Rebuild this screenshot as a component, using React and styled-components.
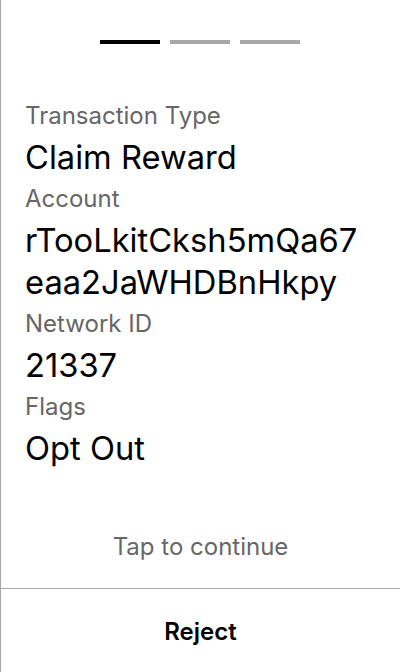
import styled, { createGlobalStyle } from 'styled-components';

const GlobalStyle = createGlobalStyle`
  html, body {
    margin: 0;
    padding: 0;
    background: #fff;
  }
  body {
    font-family: Inter, "Noto Sans", sans-serif;
  }
`;

const fields = [
  { label: 'Transaction Type', value: ['Claim Reward'] },
  { label: 'Account', value: ['rTooLkitCksh5mQa67', 'eaa2JaWHDBnHkpy'] },
  { label: 'Network ID', value: ['21337'] },
  { label: 'Flags', value: ['Opt Out'] },
];

const App = () => {
  return (
    <>
      <GlobalStyle />
      <Screen>
        <Body>
          <Steps>
            <Step active />
            <Step />
            <Step />
          </Steps>
          <Fields>
            {fields.map((f) => (
              <Field key={f.label}>
                <Label>{f.label}</Label>
                {f.value.map((line) => (
                  <Value key={line}>{line}</Value>
                ))}
              </Field>
            ))}
          </Fields>
          <Hint>Tap to continue</Hint>
        </Body>
        <Footer>
          <RejectButton>Reject</RejectButton>
        </Footer>
      </Screen>
    </>
  );
};

const Screen = styled.div`
  width: 400px;
  height: 672px;
  box-sizing: border-box;
  border-left: 1px solid #a8a8a8;
  display: flex;
  flex-direction: column;
`;

const Body = styled.div`
  flex: 1;
  display: flex;
  flex-direction: column;
`;

const Steps = styled.div`
  display: flex;
  justify-content: center;
  gap: 10px;
  margin-top: 40px;
  margin-left: -1px;
`;

const Step = styled.div`
  width: 60px;
  height: 4px;
  background: ${(p) => (p.active ? '#000' : '#a8a8a8')};
`;

const Fields = styled.div`
  display: flex;
  flex-direction: column;
  gap: 3px;
  padding: 0 24px;
  margin-top: 54px;
`;

const Field = styled.div`
  display: flex;
  flex-direction: column;
`;

const Label = styled.div`
  font-size: 24px;
  line-height: 36px;
  color: #666;
`;

const Value = styled.div`
  font-size: 32.7px;
  line-height: 42px;
  color: #000;

  ${Label} + & {
    margin-top: 2px;
  }
`;

const Hint = styled.div`
  margin-top: auto;
  margin-bottom: 26px;
  text-align: center;
  font-size: 24px;
  line-height: 30px;
  color: #666;
`;

const Footer = styled.div`
  height: 84px;
  box-sizing: border-box;
  padding-top: 1px;
  border-top: 1px solid #a8a8a8;
  display: flex;
  align-items: center;
  justify-content: center;
`;

const RejectButton = styled.button`
  border: none;
  background: none;
  font-family: Inter, "Noto Sans", sans-serif;
  font-size: 24px;
  font-weight: 600;
  color: #000;
  padding: 0;
  cursor: pointer;
`;

export default App;
